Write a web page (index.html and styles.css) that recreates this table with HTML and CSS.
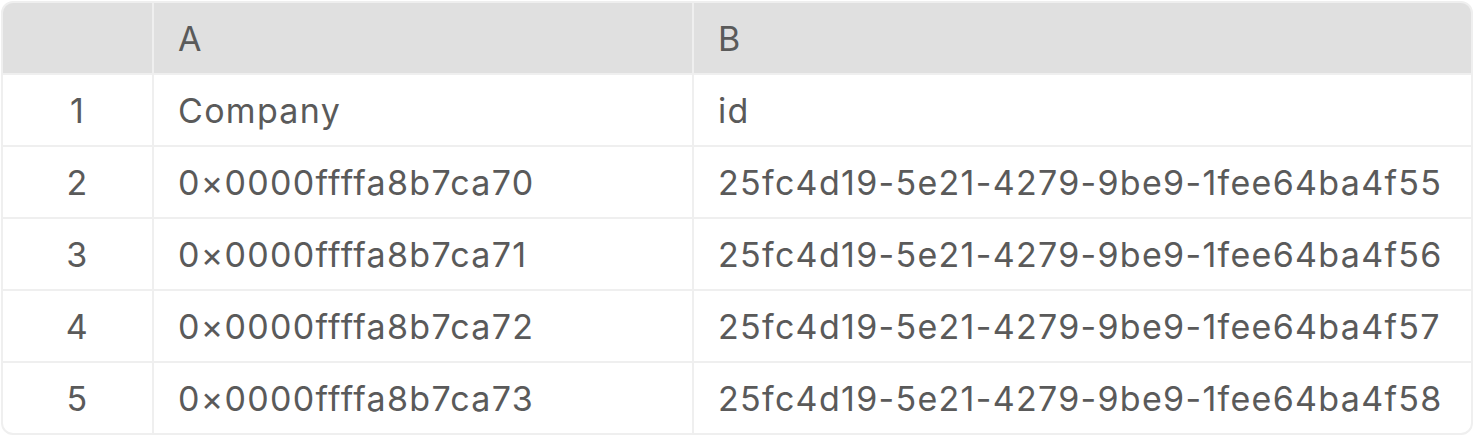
FILE: index.html
```html
<!DOCTYPE html>
<html>
<head>
<meta charset="utf-8">
<link rel="stylesheet" href="styles.css">
</head>
<body>
<div class="sheet">
  <div class="cell head num"></div>
  <div class="cell head">A</div>
  <div class="cell head">B</div>

  <div class="cell num">1</div>
  <div class="cell">Company</div>
  <div class="cell">id</div>

  <div class="cell num">2</div>
  <div class="cell">0×0000ffffa8b7ca70</div>
  <div class="cell">25fc4d19-5e21-4279-9be9-1fee64ba4f55</div>

  <div class="cell num">3</div>
  <div class="cell">0×0000ffffa8b7ca71</div>
  <div class="cell">25fc4d19-5e21-4279-9be9-1fee64ba4f56</div>

  <div class="cell num">4</div>
  <div class="cell">0×0000ffffa8b7ca72</div>
  <div class="cell">25fc4d19-5e21-4279-9be9-1fee64ba4f57</div>

  <div class="cell num">5</div>
  <div class="cell">0×0000ffffa8b7ca73</div>
  <div class="cell">25fc4d19-5e21-4279-9be9-1fee64ba4f58</div>
</div>
</body>
</html>
```

FILE: styles.css
```css
html, body {
  margin: 0;
  padding: 0;
  background: #ffffff;
}
body {
  padding: 1px;
  font-family: Inter, "Liberation Sans", sans-serif;
}
.sheet {
  display: grid;
  grid-template-columns: 149px 538px 1fr;
  grid-auto-rows: 70px;
  gap: 2px;
  background: #efefef;
  border: 2px solid #efefef;
  border-radius: 12px;
  overflow: hidden;
}
.cell {
  background: #ffffff;
  color: #5a5a5a;
  font-size: 34px;
  letter-spacing: 1.3px;
  display: flex;
  align-items: center;
  padding: 0 24px;
  white-space: nowrap;
}
.cell.head {
  background: #e0e0e0;
}
.cell.num {
  justify-content: center;
  padding: 0;
}
```
